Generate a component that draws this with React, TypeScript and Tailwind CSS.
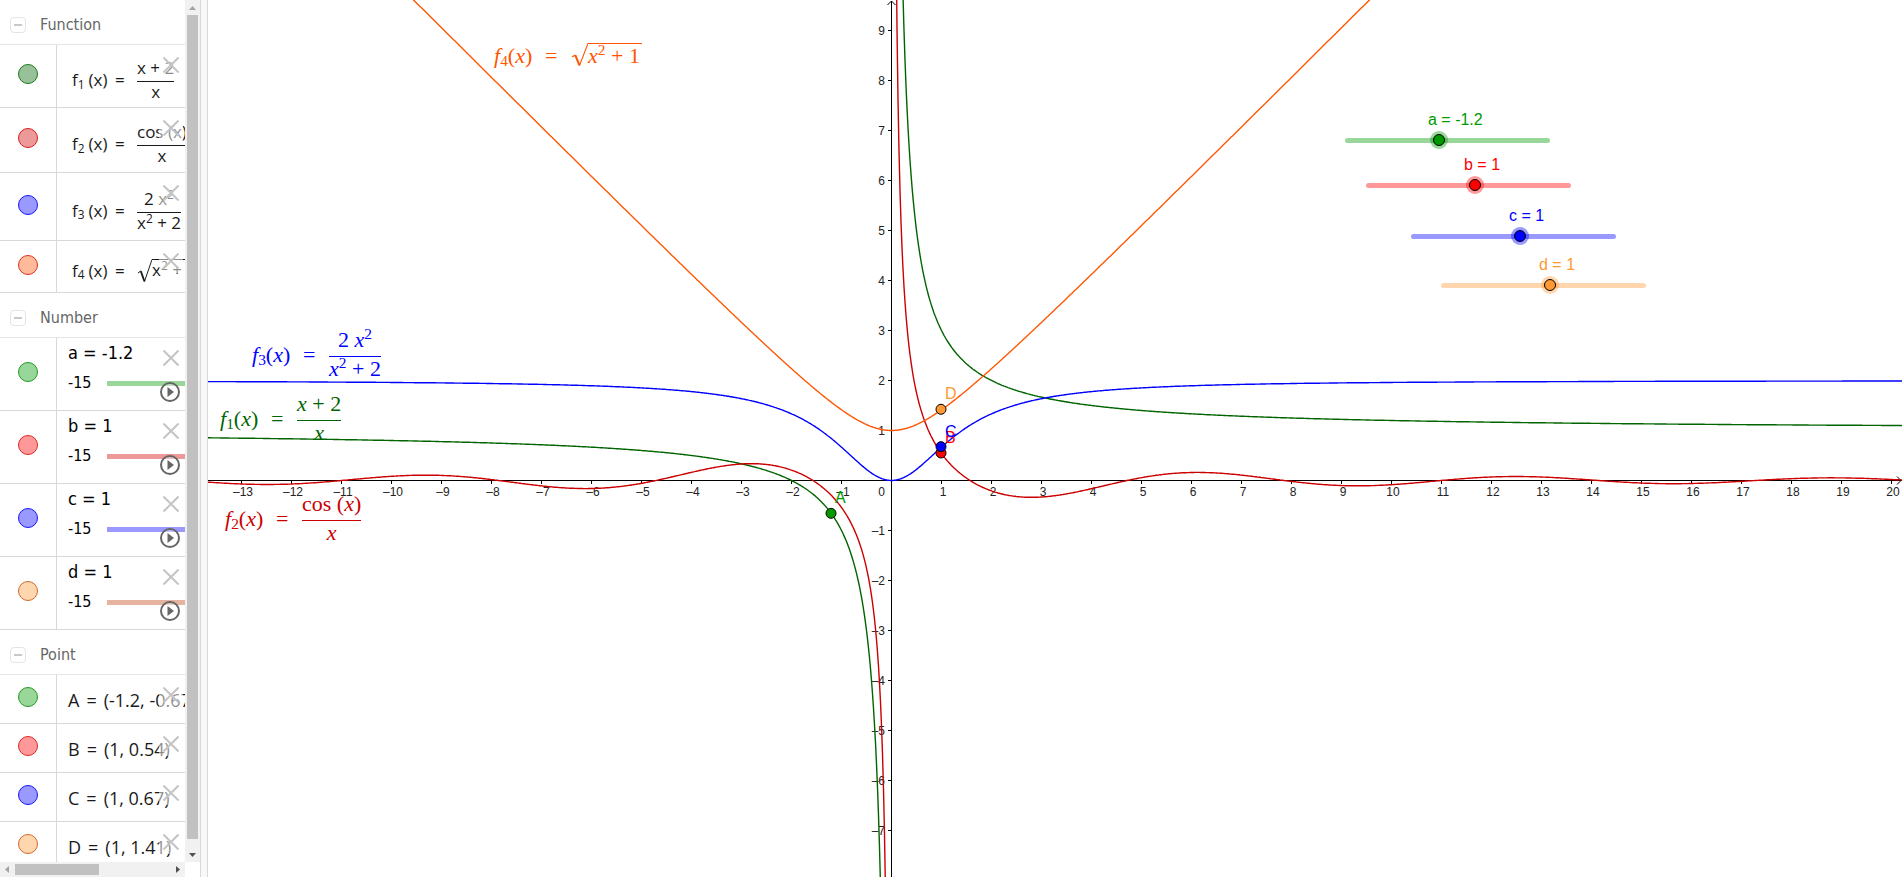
import type { ReactNode } from "react";
import { clsx } from "clsx";

const UNIT = 50;
const ORIGIN_X = 683;
const ORIGIN_Y = 480;

const px = (x: number) => ORIGIN_X + x * UNIT;
const py = (y: number) => ORIGIN_Y - y * UNIT;

/* ---------- math bits ---------- */

function Fraction({ top, bottom, canvas }: { top: ReactNode; bottom: ReactNode; canvas?: boolean }) {
  return (
    <span className="inline-flex flex-col items-stretch text-center whitespace-nowrap">
      <span className={clsx("border-b border-current", canvas ? "pb-1" : "pb-[3px]")}>{top}</span>
      <span>{bottom}</span>
    </span>
  );
}

function Root({ children, canvas }: { children: ReactNode; canvas?: boolean }) {
  return (
    <span className="inline-flex items-stretch whitespace-nowrap">
      <svg
        viewBox="0 0 16 24"
        preserveAspectRatio="none"
        className={clsx("h-6", canvas ? "w-[17px]" : "w-[15px]")}
        fill="none"
        stroke="currentColor"
        aria-hidden="true"
      >
        <path d="M1 14 L4 12" strokeWidth="1" />
        <path d="M4 12 L8 22.5" strokeWidth="2" />
        <path d="M8 22.5 L16 0.5" strokeWidth="1" />
      </svg>
      <span className={clsx("border-t border-current", canvas && "pr-0.5")}>{children}</span>
    </span>
  );
}

function Sup({ children }: { children: ReactNode }) {
  return <sup className="text-[70%]">{children}</sup>;
}

/* ---------- algebra view ---------- */

const swatches = {
  darkGreen: "border-[#1b7a1b] bg-[#99c199]",
  darkRed: "border-[#d81e1e] bg-[#ee9999]",
  blue: "border-[#1414ff] bg-[#9999ff]",
  orangeRed: "border-[#e03020] bg-[#ffbb99]",
  green: "border-[#229a22] bg-[#99d699]",
  red: "border-[#dc2828] bg-[#ff9999]",
  orange: "border-[#cc6a2c] bg-[#ffd6ad]",
};

type Swatch = keyof typeof swatches;

function GroupHeader({ title }: { title: string }) {
  return (
    <div className="flex h-[45px] items-center gap-3.5 border-b border-[#e6e6e6] pl-2.5 pt-1.5">
      <button
        type="button"
        aria-label={`Collapse ${title}`}
        className="flex size-4 items-center justify-center rounded border border-[#e4e4e4]"
      >
        <span className="h-0.5 w-2 bg-[#c8c8c8]" />
      </button>
      <h2 className="font-['DejaVu_Sans_Condensed','DejaVu_Sans',sans-serif] text-base leading-5 text-[#666]">{title}</h2>
    </div>
  );
}

function Row({ name, swatch, height, children }: { name: string; swatch: Swatch; height: string; children: ReactNode }) {
  return (
    <div className={clsx("relative flex border-b border-[#d8d8d8]", height)}>
      <div className="flex w-[57px] shrink-0 items-center justify-center border-r border-[#d8d8d8] pb-1">
        <button
          type="button"
          aria-label={`Show or hide ${name}`}
          className={clsx("size-5 rounded-full border", swatches[swatch])}
        />
      </div>
      <div className="min-w-0 grow overflow-hidden">{children}</div>
      <button
        type="button"
        aria-label={`Delete ${name}`}
        className="absolute right-0.5 top-2 flex size-6 items-center justify-center bg-white/50"
      >
        <svg viewBox="0 0 16 16" className="size-4" stroke="#c4c4c4" strokeWidth="2" aria-hidden="true">
          <path d="M0.5 0.5 L15.5 15.5 M15.5 0.5 L0.5 15.5" />
        </svg>
      </button>
    </div>
  );
}

function FunctionRow({ index, swatch, height, children }: { index: number; swatch: Swatch; height: string; children: ReactNode }) {
  return (
    <Row name={`f${index}`} swatch={swatch} height={height}>
      <div className="flex h-full items-center whitespace-nowrap pl-[15px] pt-2 font-['Open_Sans','Noto_Sans',sans-serif] text-[17px] leading-5 text-[#1a1a1a]">
        <span className="w-[43px] shrink-0">
          f<sub className="text-[70%]">{index}</sub>
          <span className="ml-1">(x)</span>
        </span>
        <span className="w-[22px] shrink-0">=</span>
        {children}
      </div>
    </Row>
  );
}

const numbers: { name: string; value: number; swatch: Swatch; track: string }[] = [
  { name: "a", value: -1.2, swatch: "green", track: "bg-[#99d699]" },
  { name: "b", value: 1, swatch: "red", track: "bg-[#ee9999]" },
  { name: "c", value: 1, swatch: "blue", track: "bg-[#9999ff]" },
  { name: "d", value: 1, swatch: "orange", track: "bg-[#e6b3a0]" },
];

function NumberRow({ name, value, swatch, track }: (typeof numbers)[number]) {
  return (
    <Row name={name} swatch={swatch} height="h-[73px]">
      <div className="pl-[11px] pt-[3px] font-['DejaVu_Sans_Condensed','DejaVu_Sans',sans-serif] text-black">
        <label htmlFor={`number-${name}`} className="block text-lg leading-6">
          {name} = {value}
        </label>
        <div className="mt-1.5 flex items-center">
          <span className="w-[39px] shrink-0 text-base leading-6">-15</span>
          <input
            id={`number-${name}`}
            type="range"
            min={-15}
            max={15}
            step={0.1}
            defaultValue={value}
            className={clsx("h-[5px] w-[200px] shrink-0 appearance-none", track)}
          />
        </div>
      </div>
      <button
        type="button"
        aria-label={`Animate ${name}`}
        className="absolute bottom-2 right-[5px] flex size-5 items-center justify-center rounded-full border-2 border-[#666] bg-white/40"
      >
        <svg viewBox="0 0 8 10" className="ml-0.5 h-2.5 w-2" fill="#666" aria-hidden="true">
          <path d="M0.5 0 L7 5 L0.5 10 Z" />
        </svg>
      </button>
    </Row>
  );
}

const points: { name: string; coords: string; swatch: Swatch }[] = [
  { name: "A", coords: "(-1.2, -0.67)", swatch: "green" },
  { name: "B", coords: "(1, 0.54)", swatch: "red" },
  { name: "C", coords: "(1, 0.67)", swatch: "blue" },
  { name: "D", coords: "(1, 1.41)", swatch: "orange" },
];

function Arrow({ d, dark }: { d: string; dark?: boolean }) {
  return (
    <svg viewBox="0 0 15 15" className="size-[15px] shrink-0" fill={dark ? "#505050" : "#a3a3a3"} aria-hidden="true">
      <path d={d} />
    </svg>
  );
}

function AlgebraView() {
  return (
    <aside className="flex w-[200px] shrink-0 flex-col bg-white">
      <div className="flex min-h-0 grow">
        <div className="min-w-0 grow overflow-hidden">
          <GroupHeader title="Function" />
          <FunctionRow index={1} swatch="darkGreen" height="h-[63px]">
            <Fraction top="x + 2" bottom="x" />
          </FunctionRow>
          <FunctionRow index={2} swatch="darkRed" height="h-[65px]">
            <Fraction top="cos (x)" bottom="x" />
          </FunctionRow>
          <FunctionRow index={3} swatch="blue" height="h-[68px]">
            <Fraction top={<>2 x<Sup>2</Sup></>} bottom={<>x<Sup>2</Sup> + 2</>} />
          </FunctionRow>
          <FunctionRow index={4} swatch="orangeRed" height="h-[52px]">
            <Root>x<Sup>2</Sup> + 1</Root>
          </FunctionRow>

          <GroupHeader title="Number" />
          {numbers.map((n) => (
            <NumberRow key={n.name} {...n} />
          ))}

          <GroupHeader title="Point" />
          {points.map((p) => (
            <Row key={p.name} name={p.name} swatch={p.swatch} height="h-[49px]">
              <div className="whitespace-nowrap pl-[11px] pt-[13px] font-['Open_Sans','Noto_Sans',sans-serif] text-lg leading-6 text-[#1a1a1a]">
                {p.name}
                <span className="mx-[7px]">=</span>
                {p.coords}
              </div>
            </Row>
          ))}
        </div>
        <div className="flex w-[15px] shrink-0 flex-col bg-[#f1f1f1]">
          <Arrow d="M4 10 L7.5 6 L11 10 Z" />
          <div className="ml-0.5 w-[11px] grow bg-[#c1c1c1]" />
          <div className="h-2" />
          <Arrow dark d="M4 6 L7.5 10 L11 6 Z" />
        </div>
      </div>
      <div className="mr-[15px] flex h-[15px] shrink-0 items-center bg-[#f1f1f1]">
        <Arrow d="M9 4 L5 7.5 L9 11 Z" />
        <div className="h-[11px] w-[84px] bg-[#c1c1c1]" />
        <div className="grow" />
        <Arrow dark d="M6 4 L10 7.5 L6 11 Z" />
      </div>
    </aside>
  );
}

/* ---------- graphics view ---------- */

function curve(fn: (x: number) => number, from: number, to: number) {
  const out: string[] = [];
  for (let x = from; x <= to; x += 0.02) {
    const y = Math.max(-30, Math.min(30, fn(x)));
    out.push(`${px(x).toFixed(1)},${py(y).toFixed(1)}`);
  }
  return out.join(" ");
}

const f1 = (x: number) => (x + 2) / x;
const f2 = (x: number) => Math.cos(x) / x;
const f3 = (x: number) => (2 * x * x) / (x * x + 2);
const f4 = (x: number) => Math.sqrt(x * x + 1);

const curves = [
  { stroke: "#006400", points: curve(f1, -14, -0.01) },
  { stroke: "#006400", points: curve(f1, 0.05, 40) },
  { stroke: "#cc0000", points: curve(f2, -14, -0.01) },
  { stroke: "#cc0000", points: curve(f2, 0.03, 40) },
  { stroke: "#0000ff", points: curve(f3, -14, 40) },
  { stroke: "#ff5500", points: curve(f4, -14, 40) },
];

const marks = [
  { name: "A", x: -1.2, y: f1(-1.2), color: "#009900" },
  { name: "B", x: 1, y: f2(1), color: "#ff0000" },
  { name: "C", x: 1, y: f3(1), color: "#0000ff" },
  { name: "D", x: 1, y: f4(1), color: "#ff9933" },
];

const range = (from: number, to: number) => Array.from({ length: to - from + 1 }, (_, i) => from + i);
const xTicks = range(-13, 20).filter((n) => n !== 0);
const yTicks = range(-7, 9).filter((n) => n !== 0);
const label = (n: number) => (n < 0 ? `–${-n}` : `${n}`);

function Plot() {
  return (
    <svg className="block size-full" role="img" aria-label="Graphs of f1, f2, f3 and f4">
      <g stroke="#000" shapeRendering="crispEdges">
        <line x1="0" y1={ORIGIN_Y + 0.5} x2="100%" y2={ORIGIN_Y + 0.5} />
        <line x1={ORIGIN_X + 0.5} y1="1" x2={ORIGIN_X + 0.5} y2="100%" />
        {xTicks.map((n) => (
          <line key={n} x1={px(n) + 0.5} x2={px(n) + 0.5} y1={ORIGIN_Y} y2={ORIGIN_Y + 4} />
        ))}
        {yTicks.map((n) => (
          <line key={n} x1={ORIGIN_X - 3} x2={ORIGIN_X} y1={py(n) + 0.5} y2={py(n) + 0.5} />
        ))}
      </g>
      <path d={`M${ORIGIN_X - 3.5} 5 l4 -4 l4 4`} fill="none" stroke="#000" />
      <svg x="100%" y={ORIGIN_Y} className="overflow-visible">
        <path d="M-5 -3.5 l4 4 l-4 4" fill="none" stroke="#000" />
      </svg>

      <g fill="#222" className="font-['Liberation_Sans',Arial,sans-serif] text-xs">
        {xTicks.map((n) => (
          <text key={n} x={px(n) + 2} y={ORIGIN_Y + 16} textAnchor="middle">{label(n)}</text>
        ))}
        {yTicks.map((n) => (
          <text key={n} x={ORIGIN_X - 6} y={py(n) + 5} textAnchor="end">{label(n)}</text>
        ))}
        <text x={ORIGIN_X - 6} y={ORIGIN_Y + 16} textAnchor="end">0</text>
      </g>

      <g fill="none" strokeWidth="1.4" transform="translate(0.5 0.5)">
        {curves.map((c, i) => (
          <polyline key={i} points={c.points} stroke={c.stroke} />
        ))}
      </g>

      <g className="font-['Liberation_Sans',Arial,sans-serif] text-base">
        {marks.map((m) => (
          <g key={m.name} fill={m.color}>
            <circle cx={px(m.x)} cy={py(m.y)} r="5" stroke="#000" />
            <text x={px(m.x) + 4} y={py(m.y) - 10}>{m.name}</text>
          </g>
        ))}
      </g>
    </svg>
  );
}

function Formula({ index, className, children }: { index: number; className: string; children: ReactNode }) {
  return (
    <div
      className={clsx(
        "absolute flex items-center whitespace-nowrap font-['Liberation_Serif','Times_New_Roman',serif] text-[22px] leading-6",
        className,
      )}
    >
      <span className="w-[51px]">
        <i>f</i>
        <sub className="text-[70%]">{index}</sub>(<i>x</i>)
      </span>
      <span className="w-[26px]">=</span>
      {children}
    </div>
  );
}

const sliders = [
  {
    name: "a",
    value: -1.2,
    place: "left-[1131px] top-[110px] text-[#009900]",
    thumb: "[&::-webkit-slider-thumb]:bg-[#009900] [&::-webkit-slider-thumb]:shadow-[0_0_0_3px_#00990066]",
  },
  {
    name: "b",
    value: 1,
    place: "left-[1152px] top-[155px] text-[#ff0000]",
    thumb: "[&::-webkit-slider-thumb]:bg-[#ff0000] [&::-webkit-slider-thumb]:shadow-[0_0_0_3px_#ff000066]",
  },
  {
    name: "c",
    value: 1,
    place: "left-[1197px] top-[206px] text-[#0000ff]",
    thumb: "[&::-webkit-slider-thumb]:bg-[#0000ff] [&::-webkit-slider-thumb]:shadow-[0_0_0_3px_#0000ff66]",
  },
  {
    name: "d",
    value: 1,
    place: "left-[1227px] top-[255px] text-[#ff9933]",
    thumb: "[&::-webkit-slider-thumb]:bg-[#ff9933] [&::-webkit-slider-thumb]:shadow-[0_0_0_3px_#ff993366]",
  },
];

function CanvasSlider({ name, value, place, thumb }: (typeof sliders)[number]) {
  const indent = Math.round(((value + 15) / 30) * 205) - 5;
  return (
    <div className={clsx("absolute w-[217px] font-['Liberation_Sans',Arial,sans-serif]", place)}>
      <label htmlFor={`slider-${name}`} className="block text-base leading-5" style={{ paddingLeft: indent }}>
        {name} = {value}
      </label>
      <div className="relative mt-0.5 flex h-4 items-center px-1.5">
        <div className="h-[5px] grow rounded-full bg-current opacity-40" />
        <input
          id={`slider-${name}`}
          type="range"
          min={-15}
          max={15}
          step={0.1}
          defaultValue={value}
          className={clsx(
            "absolute inset-0 w-full appearance-none bg-transparent",
            "[&::-webkit-slider-thumb]:size-3 [&::-webkit-slider-thumb]:appearance-none [&::-webkit-slider-thumb]:rounded-full [&::-webkit-slider-thumb]:border [&::-webkit-slider-thumb]:border-black",
            thumb,
          )}
        />
      </div>
    </div>
  );
}

function GraphicsView() {
  return (
    <main className="relative min-w-0 grow overflow-hidden bg-white">
      <Plot />
      <Formula index={4} className="left-[286px] top-[43px] text-[#ff5500]">
        <Root canvas><i>x</i><Sup>2</Sup> + 1</Root>
      </Formula>
      <Formula index={3} className="left-[44px] top-[328px] text-[#0000ff]">
        <Fraction canvas top={<>2 <i>x</i><Sup>2</Sup></>} bottom={<><i>x</i><Sup>2</Sup> + 2</>} />
      </Formula>
      <Formula index={1} className="left-[12px] top-[392px] text-[#006400]">
        <Fraction canvas top={<><i>x</i> + 2</>} bottom={<i>x</i>} />
      </Formula>
      <Formula index={2} className="left-[17px] top-[492px] text-[#cc0000]">
        <Fraction canvas top={<>cos (<i>x</i>)</>} bottom={<i>x</i>} />
      </Formula>
      {sliders.map((s) => (
        <CanvasSlider key={s.name} {...s} />
      ))}
    </main>
  );
}

export default function App() {
  return (
    <div className="flex h-screen overflow-hidden bg-white pb-0.5 pr-0.5">
      <AlgebraView />
      <div className="w-2 shrink-0 cursor-col-resize border-x border-[#d8d8d8] bg-[#f8f8f8]" />
      <GraphicsView />
    </div>
  );
}
